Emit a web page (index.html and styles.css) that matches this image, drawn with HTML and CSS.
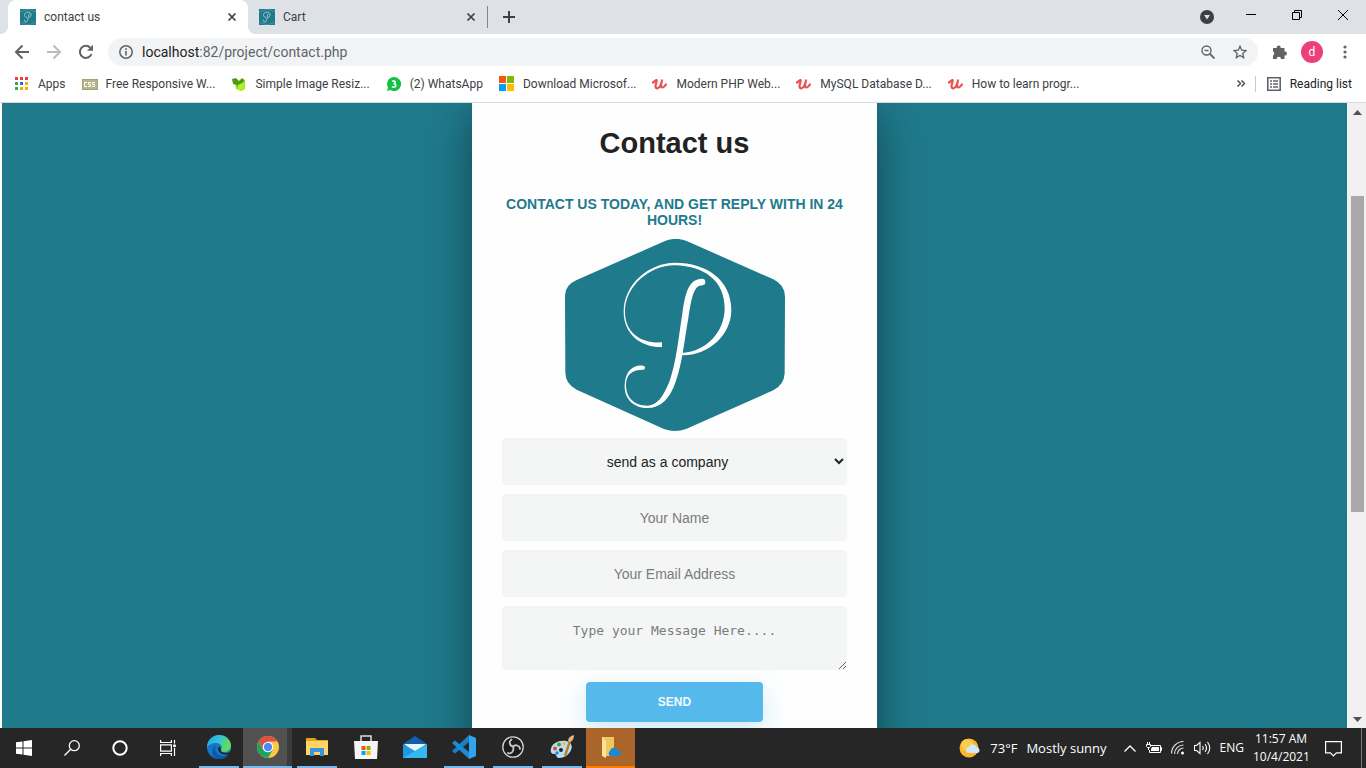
FILE: index.html
```html
<!DOCTYPE html>
<html lang="en">
<head>
<meta charset="utf-8">
<title>contact us</title>
<link rel="stylesheet" href="styles.css">
</head>
<body>
<svg class="defs" width="0" height="0" aria-hidden="true">
  <symbol id="fav" viewBox="0 0 16 16">
    <rect width="16" height="16" fill="#1f7a8c"/>
    <path d="M0 3L8 0l8 3M0 13l8 3 8-3" fill="none" stroke="#5fa3b0" stroke-width=".6"/>
    <path d="M7 8.500C3 8 4 3 8 3c4 0 4 5.500.5 5.500M9.500 4.500C8 5 8.500 13 6 13c-2 0-2-2-1-2.400" fill="none" stroke="#b4d5db" stroke-width=".8"/>
  </symbol>
  <symbol id="x" viewBox="0 0 10 10"><path d="M1.500 1.500l7 7M8.500 1.500l-7 7" stroke="#3c4043" stroke-width="1.700"/></symbol>
  <symbol id="udemy" viewBox="0 0 16 16">
    <path d="M1 6.500L4.500 4C5.500 4.500 3.500 8 3.500 10.500c.2 3 3.800 2 5.200-1.500L10 4.500C9 8 8.500 11.500 10.500 11.500c1.500 0 2-1.500 3.500-3" fill="none" stroke="#ec5252" stroke-width="2.200" stroke-linecap="round" stroke-linejoin="round"/>
  </symbol>
</svg>

<header class="browser">
  <div class="tabs">
    <div class="tab tab-active">
      <svg width="16" height="16"><use href="#fav"/></svg><span class="tab-title">contact us</span>
      <button class="tab-close" aria-label="Close tab"><svg width="10" height="10"><use href="#x"/></svg></button>
    </div>
    <div class="tab">
      <svg width="16" height="16"><use href="#fav"/></svg><span class="tab-title">Cart</span>
      <button class="tab-close" aria-label="Close tab"><svg width="10" height="10"><use href="#x"/></svg></button>
    </div>
    <button class="new-tab" aria-label="New tab"><svg width="12" height="12"><path d="M6 0v12M0 6h12" stroke="#3c4043" stroke-width="2"/></svg></button>
    <div class="window-controls">
      <button class="tab-search" aria-label="Search tabs"><svg width="14" height="14"><circle cx="7" cy="7" r="7" fill="#3c4043"/><path d="M4 5h6L7 9.500z" fill="#dee1e6"/></svg></button>
      <button aria-label="Minimize"><svg width="10" height="10"><path d="M0 4.500h10" stroke="#000"/></svg></button>
      <button aria-label="Restore"><svg width="10" height="10" fill="none" stroke="#000"><path d="M.5 2.500h7v7h-7zM2.500 2.500v-2h7v7h-2"/></svg></button>
      <button aria-label="Close"><svg width="10" height="10"><path d="M0 0l10 10M10 0L0 10" stroke="#000"/></svg></button>
    </div>
  </div>

  <div class="toolbar">
    <button aria-label="Back"><svg width="16" height="16" fill="none" stroke="#5f6368" stroke-width="2"><path d="M15 8H2M8.500 1.500L2 8l6.500 6.500"/></svg></button>
    <button aria-label="Forward"><svg width="16" height="16" fill="none" stroke="#babcbe" stroke-width="2"><path d="M1 8h13M7.500 1.500L14 8l-6.500 6.500"/></svg></button>
    <button aria-label="Reload"><svg width="16" height="16"><path d="M13.500 10A6 6 0 1 1 12.300 3.800" fill="none" stroke="#5f6368" stroke-width="2"/><path d="M15 .8v6H9z" fill="#5f6368"/></svg></button>
    <div class="omnibox">
      <svg width="14" height="14"><circle cx="7" cy="7" r="6.200" fill="none" stroke="#5f6368" stroke-width="1.500"/><path d="M7 6v4.500M7 3.300v1.600" stroke="#5f6368" stroke-width="1.600"/></svg>
      <span class="url"><b>localhost</b>:82/project/contact.php</span>
      <button aria-label="Zoom"><svg width="14" height="14" fill="none" stroke="#5f6368" stroke-width="1.400"><circle cx="5.500" cy="5.500" r="4.500"/><path d="M3.500 5.500h4"/><path d="M9 9l4.500 4.500" stroke-width="1.800"/></svg></button>
      <button aria-label="Bookmark"><svg width="14" height="14" viewBox="0 0 14 14"><path d="M7 1.300l1.700 3.900 4.300.4-3.200 2.800.9 4.200L7 10.400l-3.700 2.200.9-4.200L1 5.600l4.300-.4z" fill="none" stroke="#5f6368" stroke-width="1.300"/></svg></button>
    </div>
    <button class="ext" aria-label="Extensions"><svg width="16" height="16" viewBox="0 0 16 16"><path d="M1 4H4.800A2 2 0 1 1 8.600 4H12.500v3.600a2 2 0 1 1 0 3.900V15H9a2.200 2.200 0 0 0-4.400 0H1v-3.600a2.200 2.200 0 0 0 0-4z" fill="#5f6368"/></svg></button>
    <button class="avatar" aria-label="Profile">d</button>
    <button class="more" aria-label="Menu"><svg width="4" height="14" fill="#5f6368"><circle cx="2" cy="2" r="1.600"/><circle cx="2" cy="7" r="1.600"/><circle cx="2" cy="12" r="1.600"/></svg></button>
  </div>

  <nav class="bookmarks">
    <a href="#" class="mark apps"><svg width="14" height="14"><path d="M0 0h3v3H0zM5 0h3v3H5zM10 0h3v3h-3z" fill="#ea4335"/><path d="M0 5h3v3H0zM0 10h3v3H0z" fill="#34a853"/><path d="M5 5h3v3H5z" fill="#1a73e8"/><path d="M10 5h3v3h-3zM5 10h3v3H5zM10 10h3v3h-3z" fill="#f9ab00"/></svg>Apps</a>
    <a href="#" class="mark"><svg width="16" height="16"><rect x=".5" y="3.500" width="15" height="10" fill="#b5b48a" stroke="#a3a27c"/><path d="M5 6.500H2.500v4H5M9 6.500H6.500v2h2v2H6M13 6.500h-2.500v2h2v2H10" fill="none" stroke="#fff"/></svg>Free Responsive W...</a>
    <a href="#" class="mark"><svg width="16" height="16"><path d="M4 7l9-4 1 1v9l-4 2-5-2z" fill="#9be51b"/><path d="M1 3l4-1 3 3 3-3 2 2-1 4-5 4-1-3-4-1z" fill="#4d9a14"/><path d="M7 9l6-3v7l-6 1z" fill="#b0ee2a"/></svg>Simple Image Resiz...</a>
    <a href="#" class="mark"><svg width="16" height="16"><path d="M8 1a7 7 0 1 1-3.500 13L1 15l1-3.500A7 7 0 0 1 8 1z" fill="#10c143"/><path d="M6 5.300c3.500-1.500 4.500 2.200 1.500 2.500 3.800.2 2.800 4.700-1.700 2.900" fill="none" stroke="#fff" stroke-width="1.600"/></svg>(2) WhatsApp</a>
    <a href="#" class="mark"><svg width="16" height="16"><path d="M0 0h7v7H0z" fill="#f65314"/><path d="M8 0h7v7H8z" fill="#7cbb00"/><path d="M0 8h7v7H0z" fill="#00a1f1"/><path d="M8 8h7v7H8z" fill="#ffbb00"/></svg>Download Microsof...</a>
    <a href="#" class="mark"><svg width="16" height="16"><use href="#udemy"/></svg>Modern PHP Web...</a>
    <a href="#" class="mark"><svg width="16" height="16"><use href="#udemy"/></svg>MySQL Database D...</a>
    <a href="#" class="mark"><svg width="16" height="16"><use href="#udemy"/></svg>How to learn progr...</a>
    <button class="overflow" aria-label="More bookmarks"><svg width="8" height="7" fill="none" stroke="#3c4043" stroke-width="1.400"><path d="M.5.500l3 3-3 3M4.500.500l3 3-3 3"/></svg></button>
    <a href="#" class="mark reading"><svg width="14" height="14" fill="none" stroke="#5f6368" stroke-width="1.600"><path d="M.8.800h12.400v12.400H.8z"/><path d="M3 4h2M6 4h5M3 7h2M6 7h5M3 10h2M6 10h5"/></svg>Reading list</a>
  </nav>
</header>

<div class="viewport">
  <main class="page">
    <form class="card">
      <h1>Contact us</h1>
      <h2>Contact us today, and get reply with in 24 hours!</h2>
      <svg class="logo" width="220" height="192" viewBox="75 27 660 576" role="img" aria-label="Logo">
        <path d="M375 33Q407 20 440 33L700 148Q735 165 735 200L734 430Q732 465 700 481L438 597Q405 609 372 597L110 479Q75 462 76 425L75 195Q76 165 110 150Z" fill="#1f7a8c"/>
        <g fill="#fff">
          <path d="M366 337V351C300 352 251 310 251 245C251 160 330 98 405 98C500 98 574 150 574 240C574 315 505 378 424 376V369C500 366 554 305 554 235C554 150 490 108 405 106C335 104 255 165 255 245C255 310 305 341 366 337Z"/>
          <path d="M487 146C445 146 436 190 427 250C415 330 408 400 388 455C370 500 350 527 322 527C285 527 258 505 258 465C258 435 275 419 308 419V407C270 404 254 435 254 470C254 510 285 534 322 534C362 534 390 505 407 455C427 400 433 330 445 265C455 200 462 166 487 166Z"/>
          <circle cx="486" cy="156" r="10"/><circle cx="309" cy="413" r="6"/>
        </g>
      </svg>
      <select class="field" aria-label="Sender type"><option>send as a company</option></select>
      <input class="field" type="text" placeholder="Your Name" aria-label="Your Name">
      <input class="field" type="email" placeholder="Your Email Address" aria-label="Your Email Address">
      <textarea class="field message" placeholder="Type your Message Here...." aria-label="Message"></textarea>
      <button class="send" type="button">SEND</button>
    </form>
  </main>
  <div class="scrollbar">
    <svg width="9" height="5"><path d="M0 5l4.500-5L9 5z" fill="#505050"/></svg>
    <div class="track"><div class="thumb"></div></div>
    <svg width="9" height="5"><path d="M0 0h9L4.500 5z" fill="#505050"/></svg>
  </div>
</div>

<footer class="taskbar">
  <button class="sys" aria-label="Start"><svg width="16" height="16" fill="#fff"><path d="M0 2.300l6.500-.9v6.100H0zM7.500 1.200L16 0v7.500H7.500zM0 8.500h6.500v6.100L0 13.700zM7.500 8.500H16V16l-8.500-1.200z"/></svg></button>
  <button class="sys" aria-label="Search"><svg width="16" height="16" fill="none" stroke="#fff" stroke-width="1.300"><circle cx="10.300" cy="5.700" r="5"/><path d="M6.700 9.300L.5 15.500"/></svg></button>
  <button class="sys" aria-label="Cortana"><svg width="16" height="16"><circle cx="8" cy="8" r="6.700" fill="none" stroke="#fff" stroke-width="2"/></svg></button>
  <button class="sys" aria-label="Task view"><svg width="16" height="16" fill="none" stroke="#fff" stroke-width="1.200"><path d="M.6 0v2.500h10.800V0M.6 4.800h10.800v6.400H.6zM.6 16v-2.500h10.800V16M14.500 0v3.500M14.500 8v8"/><path d="M13.200 4.500h2.600v2.600h-2.600z" fill="#fff" stroke="none"/></svg></button>
  <button class="app open" aria-label="Edge"><svg width="24" height="24" viewBox="0 0 24 24">
    <defs><linearGradient id="eg" x1="0" x2="1" y1="0" y2=".4"><stop offset="0" stop-color="#1b9de2"/><stop offset=".5" stop-color="#35c1d8"/><stop offset="1" stop-color="#62dc55"/></linearGradient></defs>
    <circle cx="12" cy="12" r="12" fill="#1377ce"/>
    <path d="M0 11C1 4 6 0 12 0c7 0 12 5 12 10.500 0 4-3 6-6.500 6-2.500 0-4-1-3.200-2.300C16 11 13 8 9 8c-4 0-8 2-9 5z" fill="url(#eg)"/>
    <path d="M9 10.500C6 15 10 21 16 21c3 0 4.500-1 6-2.500C20 22 16 24 12.500 24 7 24 4 19 5.500 14.500 6.200 12 7.500 11 9 10.500z" fill="#0c59a4"/>
    <path d="M24 11c0 4-3 6-7 6-3 0-4-1.500-2.500-3 1 3 5 3 9.500-3z" fill="#4bcf79"/><path d="M14 14c-1.500 3.500 5 5 8.500 3l2 0-1.500 1.700c-4 2.300-12 .3-12-5.200 0-2 2-3 3 .5z" fill="#262626"/>
  </svg></button>
  <button class="app active" aria-label="Chrome"><svg width="22" height="22" viewBox="0 0 22 22">
    <circle cx="11" cy="11" r="11" fill="#fdc83f"/><path d="M1.500 5.500A11 11 0 0 1 20.500 5.500H11L6.200 13.700z" fill="#dd4f43"/><path d="M1.500 5.500A11 11 0 0 0 11 22l4.800-8.200H6.200z" fill="#1ca261"/><circle cx="11" cy="11" r="5.300" fill="#fff"/><circle cx="11" cy="11" r="4.200" fill="#4c8bf5"/>
  </svg></button>
  <button class="app open" aria-label="File Explorer"><svg width="22" height="20" viewBox="0 0 22 20"><path d="M0 1h9l2 2h11v3H0z" fill="#e6a318"/><path d="M0 4h22v14H0z" fill="#ffd567"/><path d="M4 11h14v8h-4v-4H8v4H4z" fill="#3a95dd"/></svg></button>
  <button class="app" aria-label="Store"><svg width="24" height="24" viewBox="0 0 24 24"><path d="M7 7V1h10v6" fill="none" stroke="#ddd" stroke-width="1.500"/><path d="M0 6h24l-1 18H1z" fill="#f5f5f5"/><path d="M7.500 11h4v4h-4z" fill="#f25022"/><path d="M12.500 11h4v4h-4z" fill="#7fba00"/><path d="M7.500 16h4v4h-4z" fill="#00a4ef"/><path d="M12.500 16h4v4h-4z" fill="#ffb900"/></svg></button>
  <button class="app" aria-label="Mail"><svg width="24" height="24" viewBox="0 0 24 24"><path d="M0 9l12-8 12 8v3H0z" fill="#0f5fb0"/><path d="M1 9h22l-9 7h-4z" fill="#eef3f7"/><path d="M0 9l12 7 12-7v14H0z" fill="#1f97e3"/><path d="M0 23L24 9v14z" fill="#35b8f1"/></svg></button>
  <button class="app open" aria-label="Code"><svg width="24" height="24" viewBox="0 0 24 24"><path d="M17 0l7 3v18l-7 3z" fill="#2fa5ee"/><path d="M17 0v7L3 18.500 0 16z" fill="#1b7fc7"/><path d="M17 24v-7L3 5.500 0 8z" fill="#1c8bd6"/></svg></button>
  <button class="app open" aria-label="OBS"><svg width="22" height="22" viewBox="0 0 22 22"><circle cx="11" cy="11" r="10.200" fill="#1d1b1e" stroke="#d6d6d6" stroke-width="1.300"/><path d="M9.500 3.500C6.500 5.500 7.500 10 11 10.500M18 13c-.3-3.500-4.500-5-7-2.500M6 17c3.200 1.500 6.500-2 5-6.500" fill="none" stroke="#c9c9c9" stroke-width="1.800" stroke-linecap="round"/></svg></button>
  <button class="app open" aria-label="Paint"><svg width="24" height="24" viewBox="0 0 24 24"><path d="M1 14C2 8 9 5 16 6c5 1 7 5 5 9-2 5-7 8-12 8-3 0-2-3-4-4-3 0-5-1-4-5z" fill="#b9dff3"/><circle cx="5" cy="13.500" r="2" fill="#e34b2f"/><circle cx="9" cy="9.500" r="2" fill="#3aa545"/><circle cx="14" cy="8.500" r="1.800" fill="#f3c12f"/><circle cx="7" cy="18" r="1.700" fill="#2f7fd1"/><circle cx="11" cy="15" r="2" fill="#262626"/><path d="M20 6l-5 15" stroke="#c17a34" stroke-width="2.400"/><path d="M18 6c0-3 2-5 6-6 0 3-1 6-4 7z" fill="#e1b77d"/></svg></button>
  <button class="app alert" aria-label="OneDrive folder"><svg width="20" height="22" viewBox="0 0 20 22"><path d="M1 1h12v19H1z" fill="#f0c75c"/><path d="M1 1l4 4v17l-4-2z" fill="#ffe39a"/><path d="M9 20a3 3 0 0 1 0-5c1-4 6-4 7-1 4 0 5 5 2 6z" fill="#1b87d8"/></svg></button>

  <div class="tray">
    <svg width="22" height="20" viewBox="0 0 22 20"><circle cx="10" cy="10" r="9.500" fill="#fdb52a"/><circle cx="8" cy="7" r="6" fill="#ffcb4d"/><path d="M10 15a3 3 0 0 1 0-6c2-4 7-3 7 0 4 0 5 6 1 6z" fill="#cfe8fb"/></svg>
    <span class="weather"><span>73°F</span><span>Mostly sunny</span></span>
    <svg class="chev" width="12" height="7"><path d="M.5 6.500L6 1l5.500 5.500" fill="none" stroke="#fff" stroke-width="1.300"/></svg>
    <svg width="16" height="12" fill="none" stroke="#fff"><path d="M5 3.500h9.500v7h-11V8M14.500 5.500h1v3h-1"/><path d="M6 5h7v4H5V7z" fill="#fff" stroke="none"/><path d="M1.500 0v2M3.500 0v2M.5 2.500h4v2l-1 1h-2l-1-1zM2.500 5.500V8" /></svg>
    <svg width="14" height="14" fill="none" stroke="#ddd" stroke-width="1.200"><path d="M.5 12.500a12 12 0 0 1 12-12M3.500 13a9 9 0 0 1 9-9M6.500 13a6 6 0 0 1 6-6"/><circle cx="11.500" cy="12" r="1.500" fill="#fff" stroke="none"/></svg>
    <svg width="17" height="14" fill="none" stroke="#fff" stroke-width="1.100"><path d="M.5 4.500h2l3.500-3v11l-3.500-3h-2zM8.500 5q1.500 2 0 4M11 3q3 4 0 8M13.500 1q4.500 6 0 12"/></svg>
    <span class="lang">ENG</span>
    <span class="clock">11:57 AM<br>10/4/2021</span>
    <svg class="notice" width="17" height="17" fill="none" stroke="#fff" stroke-width="1.200"><path d="M.6 1.600h15.800v11.200h-5l-3 3-3-3H.6z"/></svg>
    <span class="peek"></span>
  </div>
</footer>
</body>
</html>
```

FILE: styles.css
```css
* { box-sizing: border-box; }
body {
  margin: 0;
  height: 100vh;
  display: flex;
  flex-direction: column;
  overflow: hidden;
  background: #fff;
  font: 12px/16px "Open Sans", "Noto Sans", sans-serif;
  color: #3c4043;
}
.defs { position: absolute; }
button { font: inherit; color: inherit; border: 0; padding: 0; background: none; display: flex; align-items: center; justify-content: center; }
a { color: inherit; text-decoration: none; }
svg { display: block; flex: none; }

/* Browser chrome */
.browser { flex: none; border-bottom: 1px solid #d9dbdd; font-family: Roboto, "Open Sans", sans-serif; }
.tabs { display: flex; height: 34px; background: #dee1e6; padding-left: 8px; }
.tab { display: flex; align-items: center; gap: 8px; width: 240px; padding: 0 11px; border-right: 1px solid transparent; }
.tab-active { position: relative; background: #fff; border: 0; border-radius: 8px 8px 0 0; padding-left: 12px; }
.tab-active::before, .tab-active::after { content: ""; position: absolute; bottom: 0; width: 8px; height: 8px; }
.tab-active::before { right: 100%; background: radial-gradient(circle at 0 0, transparent 8px, #fff 8px); }
.tab-active::after { left: 100%; background: radial-gradient(circle at 100% 0, transparent 8px, #fff 8px); }
.tab-title { flex: 1; }
.tab-close { width: 10px; height: 16px; }
.new-tab { width: 42px; }
.tab:not(.tab-active) { border-image: linear-gradient(transparent 20%, #80868b 20%, #80868b 80%, transparent 80%) 1; }
.window-controls { display: flex; margin-left: auto; }
.window-controls button { width: 46px; height: 29px; }
.window-controls .tab-search { width: 42px; height: 34px; }
.toolbar { display: flex; align-items: center; height: 36px; padding: 0 8px 0 6px; }
.toolbar > button { width: 32px; height: 28px; }
.omnibox { flex: 1; display: flex; align-items: center; height: 28px; margin: 0 6px; padding: 0 2px 0 11px; border-radius: 14px; background: #f1f3f4; }
.omnibox button { width: 32px; height: 28px; }
.url { flex: 1; margin-left: 9px; font-size: 14px; color: #5f6368; }
.url b { font-weight: 400; color: #202124; }
.toolbar > .avatar { width: 22px; height: 22px; margin: 0 5px; border-radius: 50%; background: #ec407a; color: #fff; }
.toolbar > .more { width: 26px; margin-left: 4px; }
.bookmarks { display: flex; align-items: center; height: 32px; padding: 0 14px 5px 15px; gap: 16px; white-space: nowrap; }
.mark { display: flex; align-items: center; gap: 8px; }
.apps { gap: 9px; }
.overflow { margin-left: auto; }
.reading { gap: 9px; margin-left: -6px; padding-left: 11px; border-left: 1px solid #c6c9cc; color: #202124; }

/* Page */
.viewport { flex: 1; min-height: 0; display: flex; padding-left: 2px; }
.page { flex: 1; display: flex; justify-content: center; align-items: flex-start; overflow: hidden; background: #1f7a8c; font-family: "Liberation Sans", Arial, sans-serif; }
.card {
  width: 100%;
  max-width: 405px;
  min-height: 120%;
  display: flex;
  flex-direction: column;
  align-items: center;
  padding: 24px 30px;
  background: #fefefe;
  text-align: center;
  box-shadow: 0 14px 54px rgba(0, 0, 0, .25), 0 10px 30px rgba(0, 0, 0, .2);
}
h1 { margin: 0; font-size: 29px; line-height: 33px; color: #222; }
h2 { margin: 36px 0 0; font-size: 14px; line-height: 16px; text-transform: uppercase; color: #1f7a8c; }
.logo { margin: 11px 0 7px; }
.field {
  display: block;
  width: 100%;
  height: 47px;
  margin: 0 0 9px;
  padding: 0 15px;
  border: 0;
  border-radius: 4px;
  background: #f4f6f6;
  font: 14px/16px "Liberation Sans", Arial, sans-serif;
  color: #222;
  text-align: center;
}
select.field { padding: 0 2px 0 0; }
.field::placeholder { color: #7b7b7b; }
.message { height: 64px; padding: 17px 15px; margin-bottom: 12px; font: 13px/16px "DejaVu Sans Mono", monospace; resize: vertical; }
.send { width: 177px; height: 40px; border-radius: 4px; background: #56b9ec; color: #f1faff; font-size: 12px; box-shadow: 0 9px 27px rgba(86, 185, 236, .3); font-weight: 700; }
.scrollbar { width: 19px; display: flex; flex-direction: column; align-items: center; justify-content: space-between; gap: 6px; padding: 7px 0 6px 2px; background: #f1f1f1; }
.track { flex: 1; align-self: stretch; padding: 0 2px; display: flex; flex-direction: column; }
.track::before { content: ""; flex: 75; }
.track::after { content: ""; flex: 199; }
.thumb { flex: 316; background: #a8a8a8; }

/* Taskbar */
.taskbar { flex: none; height: 40px; display: flex; background: #262626; color: #fff; }
.sys { width: 48px; }
.app { width: 49px; border-bottom: 2px solid transparent; }
.app.open { background: linear-gradient(#76b9ed, #76b9ed) center bottom / 40px 2px no-repeat border-box; }
.app.active { background: linear-gradient(90deg, #515151 44px, #3b3b3b 44px); border-bottom-color: #76b9ed; }
.app.alert { background: #ab6429; border-bottom-color: #ff7a00; }
.sys + .app { margin-left: 2px; }
.tray { margin-left: auto; display: flex; align-items: center; gap: 9px; }
.weather { display: flex; gap: 9px; font-size: 13px; }
.chev { margin: 0 1px 0 8px; }
.clock { width: 56px; line-height: 18px; text-align: center; }
.notice { margin: 0 10px 0 7px; }
.peek { width: 5px; align-self: stretch; border-left: 1px solid #777; }
```
